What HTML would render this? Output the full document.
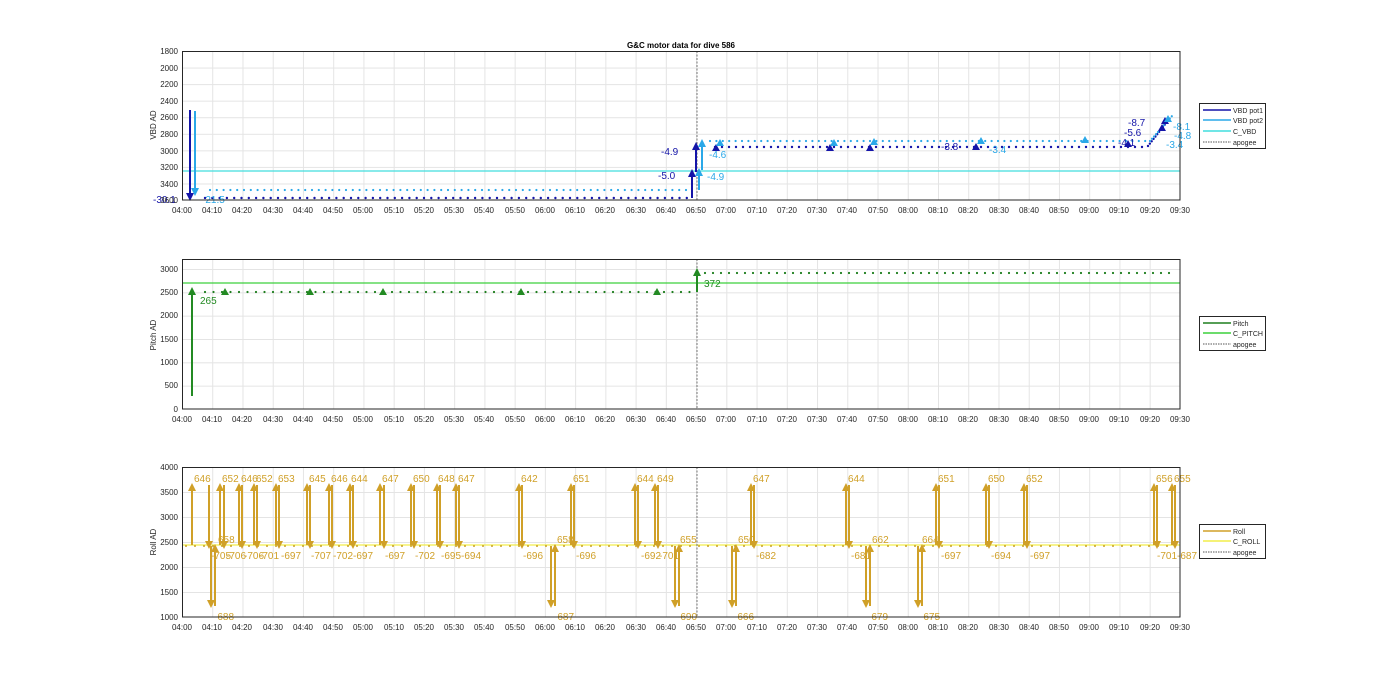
<!DOCTYPE html>
<html><head><meta charset="utf-8"><style>body{margin:0;background:#fff}svg{display:block}text{font-family:"Liberation Sans",sans-serif}</style></head><body>
<svg width="1400" height="693" viewBox="0 0 1400 693" xmlns="http://www.w3.org/2000/svg">
<defs>
<pattern id="vg" x="182" y="0" width="30.24" height="700" patternUnits="userSpaceOnUse"><line x1="0.5" y1="0" x2="0.5" y2="700" stroke="#e4e4e4"/></pattern>
<pattern id="hg1" x="0" y="51" width="1400" height="16.56" patternUnits="userSpaceOnUse"><line x1="0" y1="0.5" x2="1400" y2="0.5" stroke="#e4e4e4"/></pattern>
<pattern id="hg2" x="0" y="269" width="1400" height="23.33" patternUnits="userSpaceOnUse"><line x1="0" y1="0.5" x2="1400" y2="0.5" stroke="#e4e4e4"/></pattern>
<pattern id="hg3" x="0" y="467" width="1400" height="25" patternUnits="userSpaceOnUse"><line x1="0" y1="0.5" x2="1400" y2="0.5" stroke="#e4e4e4"/></pattern>
<marker id="mdb" markerUnits="userSpaceOnUse" markerWidth="8" markerHeight="8" refX="6" refY="4" orient="auto"><path d="M0,0 L8,4 L0,8z" fill="#1414a8"/></marker>
<marker id="mlb" markerUnits="userSpaceOnUse" markerWidth="8" markerHeight="8" refX="6" refY="4" orient="auto"><path d="M0,0 L8,4 L0,8z" fill="#2aa8e8"/></marker>
<marker id="mg" markerUnits="userSpaceOnUse" markerWidth="8" markerHeight="8" refX="6" refY="4" orient="auto"><path d="M0,0 L8,4 L0,8z" fill="#238a23"/></marker>
<marker id="my" markerUnits="userSpaceOnUse" markerWidth="8" markerHeight="8" refX="6" refY="4" orient="auto"><path d="M0,0 L8,4 L0,8z" fill="#d0a028"/></marker>
</defs>

<!-- ===== TOP ===== -->
<rect x="182" y="51" width="998" height="149" fill="url(#vg)"/>
<rect x="182" y="51" width="998" height="149" fill="url(#hg1)"/>
<text x="681" y="48" font-size="8" font-weight="bold" text-anchor="middle">G&amp;C motor data for dive 586</text>
<line x1="182" y1="171" x2="1180" y2="171" stroke="#40dede" stroke-width="1.3"/>
<line x1="697" y1="51" x2="697" y2="200" stroke="#777" stroke-dasharray="2,1.5"/>
<line x1="205" y1="198" x2="690" y2="198" stroke="#1414a8" stroke-width="2.4" stroke-linecap="round" stroke-dasharray="0 7.3"/>
<line x1="210" y1="190" x2="690" y2="190" stroke="#2aa8e8" stroke-width="2.2" stroke-linecap="round" stroke-dasharray="0 6.8"/>
<line x1="715" y1="147" x2="1148" y2="147" stroke="#1414a8" stroke-width="2.4" stroke-linecap="round" stroke-dasharray="0 7"/>
<line x1="710" y1="141" x2="1150" y2="141" stroke="#2aa8e8" stroke-width="2.2" stroke-linecap="round" stroke-dasharray="0 6.4"/>
<line x1="1148" y1="146" x2="1170" y2="118" stroke="#1414a8" stroke-width="2.4" stroke-linecap="round" stroke-dasharray="0 3"/>
<line x1="1150" y1="141" x2="1172" y2="116" stroke="#2aa8e8" stroke-width="2.2" stroke-linecap="round" stroke-dasharray="0 3"/>
<line x1="190" y1="110" x2="190" y2="199" stroke="#1414a8" stroke-width="2" marker-end="url(#mdb)"/>
<line x1="195" y1="111" x2="195" y2="194" stroke="#2aa8e8" stroke-width="2" marker-end="url(#mlb)"/>
<line x1="692" y1="198" x2="692" y2="171" stroke="#1414a8" stroke-width="2" marker-end="url(#mdb)"/>
<line x1="696" y1="172" x2="696" y2="144" stroke="#1414a8" stroke-width="2" marker-end="url(#mdb)"/>
<line x1="699" y1="190" x2="699" y2="170" stroke="#2aa8e8" stroke-width="2" marker-end="url(#mlb)"/>
<line x1="702" y1="170" x2="702" y2="141" stroke="#2aa8e8" stroke-width="2" marker-end="url(#mlb)"/>
<g fill="#1414a8"><path d="M712,151l4,-7l4,7z M826,151l4,-7l4,7z M866,151l4,-7l4,7z M972,150l4,-7l4,7z M1124,147l4,-7l4,7z M1158,131l4,-7l4,7z M1161,124l4,-7l4,7z"/></g>
<g fill="#2aa8e8"><path d="M716,146l4,-7l4,7z M830,146l4,-7l4,7z M870,145l4,-7l4,7z M977,144l4,-7l4,7z M1081,143l4,-7l4,7z M1164,122l4,-7l4,7z"/></g>
<g font-size="10" fill="#1414a8"><text x="153" y="203">-30.1</text><text x="658" y="179">-5.0</text><text x="661" y="155">-4.9</text><text x="941" y="150">-3.8</text><text x="1128" y="126">-8.7</text><text x="1124" y="136">-5.6</text><text x="1118" y="146">-4.1</text></g>
<g font-size="10" fill="#2aa8e8"><text x="202" y="203">-21.5</text><text x="709" y="158">-4.6</text><text x="707" y="180">-4.9</text><text x="989" y="153">-3.4</text><text x="1173" y="130">-8.1</text><text x="1174" y="139">-4.8</text><text x="1166" y="148">-3.4</text></g>
<rect x="182.5" y="51.5" width="997.5" height="148.5" fill="none" stroke="#262626" stroke-width="1"/>
<g font-size="8" fill="#262626" text-anchor="end"><text x="178" y="54">1800</text><text x="178" y="71">2000</text><text x="178" y="87">2200</text><text x="178" y="104">2400</text><text x="178" y="120">2600</text><text x="178" y="137">2800</text><text x="178" y="154">3000</text><text x="178" y="170">3200</text><text x="178" y="187">3400</text><text x="178" y="203">3600</text></g>
<text transform="translate(156,125) rotate(-90)" font-size="8" text-anchor="middle" fill="#262626">VBD AD</text>
<g font-size="8" fill="#262626" text-anchor="middle"><text x="182" y="213">04:00</text><text x="212" y="213">04:10</text><text x="242" y="213">04:20</text><text x="273" y="213">04:30</text><text x="303" y="213">04:40</text><text x="333" y="213">04:50</text><text x="363" y="213">05:00</text><text x="394" y="213">05:10</text><text x="424" y="213">05:20</text><text x="454" y="213">05:30</text><text x="484" y="213">05:40</text><text x="515" y="213">05:50</text><text x="545" y="213">06:00</text><text x="575" y="213">06:10</text><text x="605" y="213">06:20</text><text x="636" y="213">06:30</text><text x="666" y="213">06:40</text><text x="696" y="213">06:50</text><text x="726" y="213">07:00</text><text x="757" y="213">07:10</text><text x="787" y="213">07:20</text><text x="817" y="213">07:30</text><text x="847" y="213">07:40</text><text x="878" y="213">07:50</text><text x="908" y="213">08:00</text><text x="938" y="213">08:10</text><text x="968" y="213">08:20</text><text x="999" y="213">08:30</text><text x="1029" y="213">08:40</text><text x="1059" y="213">08:50</text><text x="1089" y="213">09:00</text><text x="1119" y="213">09:10</text><text x="1150" y="213">09:20</text><text x="1180" y="213">09:30</text></g>
<rect x="1199.5" y="103.5" width="66" height="45" fill="#fff" stroke="#262626"/>
<line x1="1203" y1="110" x2="1231" y2="110" stroke="#1414a8" stroke-width="1.5"/><line x1="1203" y1="120" x2="1231" y2="120" stroke="#2aa8e8" stroke-width="1.5"/><line x1="1203" y1="131" x2="1231" y2="131" stroke="#40dede" stroke-width="1.5"/><line x1="1203" y1="142" x2="1231" y2="142" stroke="#555" stroke-dasharray="1.5,1"/>
<g font-size="7" fill="#262626"><text x="1233" y="113">VBD pot1</text><text x="1233" y="123">VBD pot2</text><text x="1233" y="134">C_VBD</text><text x="1233" y="145">apogee</text></g>

<!-- ===== MIDDLE ===== -->
<rect x="182" y="259" width="998" height="150" fill="url(#vg)"/>
<rect x="182" y="259" width="998" height="150" fill="url(#hg2)"/>
<line x1="182" y1="283" x2="1180" y2="283" stroke="#3cd03c" stroke-width="1.3"/>
<line x1="697" y1="259" x2="697" y2="409" stroke="#777" stroke-dasharray="2,1.5"/>
<line x1="205" y1="292" x2="690" y2="292" stroke="#1e7e1e" stroke-width="2.2" stroke-linecap="round" stroke-dasharray="0 8.5"/>
<line x1="705" y1="273" x2="1172" y2="273" stroke="#1e7e1e" stroke-width="2.2" stroke-linecap="round" stroke-dasharray="0 8"/>
<line x1="192" y1="396" x2="192" y2="289" stroke="#238a23" stroke-width="2" marker-end="url(#mg)"/>
<line x1="697" y1="292" x2="697" y2="270" stroke="#238a23" stroke-width="2" marker-end="url(#mg)"/>
<g fill="#238a23"><path d="M221,295l4,-7l4,7z M306,295l4,-7l4,7z M379,295l4,-7l4,7z M517,295l4,-7l4,7z M653,295l4,-7l4,7z"/></g>
<g font-size="10" fill="#238a23"><text x="200" y="304">265</text><text x="704" y="287">372</text></g>
<rect x="182.5" y="259.5" width="997.5" height="149.5" fill="none" stroke="#262626"/>
<g font-size="8" fill="#262626" text-anchor="end"><text x="178" y="272">3000</text><text x="178" y="295">2500</text><text x="178" y="318">2000</text><text x="178" y="342">1500</text><text x="178" y="365">1000</text><text x="178" y="388">500</text><text x="178" y="412">0</text></g>
<text transform="translate(156,335) rotate(-90)" font-size="8" text-anchor="middle" fill="#262626">Pitch AD</text>
<g font-size="8" fill="#262626" text-anchor="middle"><text x="182" y="422">04:00</text><text x="212" y="422">04:10</text><text x="242" y="422">04:20</text><text x="273" y="422">04:30</text><text x="303" y="422">04:40</text><text x="333" y="422">04:50</text><text x="363" y="422">05:00</text><text x="394" y="422">05:10</text><text x="424" y="422">05:20</text><text x="454" y="422">05:30</text><text x="484" y="422">05:40</text><text x="515" y="422">05:50</text><text x="545" y="422">06:00</text><text x="575" y="422">06:10</text><text x="605" y="422">06:20</text><text x="636" y="422">06:30</text><text x="666" y="422">06:40</text><text x="696" y="422">06:50</text><text x="726" y="422">07:00</text><text x="757" y="422">07:10</text><text x="787" y="422">07:20</text><text x="817" y="422">07:30</text><text x="847" y="422">07:40</text><text x="878" y="422">07:50</text><text x="908" y="422">08:00</text><text x="938" y="422">08:10</text><text x="968" y="422">08:20</text><text x="999" y="422">08:30</text><text x="1029" y="422">08:40</text><text x="1059" y="422">08:50</text><text x="1089" y="422">09:00</text><text x="1119" y="422">09:10</text><text x="1150" y="422">09:20</text><text x="1180" y="422">09:30</text></g>
<rect x="1199.5" y="316.5" width="66" height="34" fill="#fff" stroke="#262626"/>
<line x1="1203" y1="323" x2="1231" y2="323" stroke="#1e7e1e" stroke-width="1.5"/><line x1="1203" y1="333" x2="1231" y2="333" stroke="#3cd03c" stroke-width="1.5"/><line x1="1203" y1="344" x2="1231" y2="344" stroke="#555" stroke-dasharray="1.5,1"/>
<g font-size="7" fill="#262626"><text x="1233" y="326">Pitch</text><text x="1233" y="336">C_PITCH</text><text x="1233" y="347">apogee</text></g>

<!-- ===== BOTTOM ===== -->
<rect x="182" y="467" width="998" height="150" fill="url(#vg)"/>
<rect x="182" y="467" width="998" height="150" fill="url(#hg3)"/>
<line x1="182" y1="545" x2="1180" y2="545" stroke="#f2ee4a" stroke-width="1.3"/>
<line x1="697" y1="467" x2="697" y2="617" stroke="#777" stroke-dasharray="2,1.5"/>
<line x1="186" y1="546" x2="1172" y2="546" stroke="#c8a028" stroke-width="2" stroke-linecap="round" stroke-dasharray="0 9"/>
<g stroke="#d0a028" stroke-width="2">
<line x1="192" y1="545" x2="192" y2="485" marker-end="url(#my)"/><line x1="209" y1="485" x2="209" y2="547" marker-end="url(#my)"/>
<line x1="220" y1="545" x2="220" y2="485" marker-end="url(#my)"/><line x1="224" y1="485" x2="224" y2="547" marker-end="url(#my)"/>
<line x1="239" y1="545" x2="239" y2="485" marker-end="url(#my)"/><line x1="242" y1="485" x2="242" y2="547" marker-end="url(#my)"/>
<line x1="254" y1="545" x2="254" y2="485" marker-end="url(#my)"/><line x1="257" y1="485" x2="257" y2="547" marker-end="url(#my)"/>
<line x1="276" y1="545" x2="276" y2="485" marker-end="url(#my)"/><line x1="279" y1="485" x2="279" y2="547" marker-end="url(#my)"/>
<line x1="307" y1="545" x2="307" y2="485" marker-end="url(#my)"/><line x1="310" y1="485" x2="310" y2="547" marker-end="url(#my)"/>
<line x1="329" y1="545" x2="329" y2="485" marker-end="url(#my)"/><line x1="332" y1="485" x2="332" y2="547" marker-end="url(#my)"/>
<line x1="350" y1="545" x2="350" y2="485" marker-end="url(#my)"/><line x1="353" y1="485" x2="353" y2="547" marker-end="url(#my)"/>
<line x1="380" y1="545" x2="380" y2="485" marker-end="url(#my)"/><line x1="384" y1="485" x2="384" y2="547" marker-end="url(#my)"/>
<line x1="411" y1="545" x2="411" y2="485" marker-end="url(#my)"/><line x1="414" y1="485" x2="414" y2="547" marker-end="url(#my)"/>
<line x1="437" y1="545" x2="437" y2="485" marker-end="url(#my)"/><line x1="440" y1="485" x2="440" y2="547" marker-end="url(#my)"/>
<line x1="456" y1="545" x2="456" y2="485" marker-end="url(#my)"/><line x1="459" y1="485" x2="459" y2="547" marker-end="url(#my)"/>
<line x1="519" y1="545" x2="519" y2="485" marker-end="url(#my)"/><line x1="522" y1="485" x2="522" y2="547" marker-end="url(#my)"/>
<line x1="571" y1="545" x2="571" y2="485" marker-end="url(#my)"/><line x1="574" y1="485" x2="574" y2="547" marker-end="url(#my)"/>
<line x1="635" y1="545" x2="635" y2="485" marker-end="url(#my)"/><line x1="638" y1="485" x2="638" y2="547" marker-end="url(#my)"/>
<line x1="655" y1="545" x2="655" y2="485" marker-end="url(#my)"/><line x1="658" y1="485" x2="658" y2="547" marker-end="url(#my)"/>
<line x1="751" y1="545" x2="751" y2="485" marker-end="url(#my)"/><line x1="754" y1="485" x2="754" y2="547" marker-end="url(#my)"/>
<line x1="846" y1="545" x2="846" y2="485" marker-end="url(#my)"/><line x1="849" y1="485" x2="849" y2="547" marker-end="url(#my)"/>
<line x1="936" y1="545" x2="936" y2="485" marker-end="url(#my)"/><line x1="939" y1="485" x2="939" y2="547" marker-end="url(#my)"/>
<line x1="986" y1="545" x2="986" y2="485" marker-end="url(#my)"/><line x1="989" y1="485" x2="989" y2="547" marker-end="url(#my)"/>
<line x1="1024" y1="545" x2="1024" y2="485" marker-end="url(#my)"/><line x1="1027" y1="485" x2="1027" y2="547" marker-end="url(#my)"/>
<line x1="1154" y1="545" x2="1154" y2="485" marker-end="url(#my)"/><line x1="1157" y1="485" x2="1157" y2="547" marker-end="url(#my)"/>
<line x1="1172" y1="545" x2="1172" y2="485" marker-end="url(#my)"/><line x1="1175" y1="485" x2="1175" y2="547" marker-end="url(#my)"/>
<line x1="211" y1="546" x2="211" y2="606" marker-end="url(#my)"/><line x1="215" y1="606" x2="215" y2="546" marker-end="url(#my)"/>
<line x1="551" y1="546" x2="551" y2="606" marker-end="url(#my)"/><line x1="555" y1="606" x2="555" y2="546" marker-end="url(#my)"/>
<line x1="675" y1="546" x2="675" y2="606" marker-end="url(#my)"/><line x1="679" y1="606" x2="679" y2="546" marker-end="url(#my)"/>
<line x1="732" y1="546" x2="732" y2="606" marker-end="url(#my)"/><line x1="736" y1="606" x2="736" y2="546" marker-end="url(#my)"/>
<line x1="866" y1="546" x2="866" y2="606" marker-end="url(#my)"/><line x1="870" y1="606" x2="870" y2="546" marker-end="url(#my)"/>
<line x1="918" y1="546" x2="918" y2="606" marker-end="url(#my)"/><line x1="922" y1="606" x2="922" y2="546" marker-end="url(#my)"/>
</g>
<g font-size="10" fill="#d0a028">
<text x="194" y="482">646</text><text x="222" y="482">652</text><text x="241" y="482">646</text><text x="256" y="482">652</text><text x="278" y="482">653</text><text x="309" y="482">645</text><text x="331" y="482">646</text><text x="351" y="482">644</text><text x="382" y="482">647</text><text x="413" y="482">650</text><text x="438" y="482">648</text><text x="458" y="482">647</text><text x="521" y="482">642</text><text x="573" y="482">651</text><text x="637" y="482">644</text><text x="657" y="482">649</text><text x="753" y="482">647</text><text x="848" y="482">644</text><text x="938" y="482">651</text><text x="988" y="482">650</text><text x="1026" y="482">652</text><text x="1156" y="482">656</text><text x="1174" y="482">655</text>
<text x="218" y="543">658</text><text x="557" y="543">658</text><text x="680" y="543">655</text><text x="738" y="543">650</text><text x="872" y="543">662</text><text x="922" y="543">664</text>
<text x="211" y="559">-705</text><text x="226" y="559">-706</text><text x="244" y="559">-706</text><text x="259" y="559">-701</text><text x="281" y="559">-697</text><text x="311" y="559">-707</text><text x="333" y="559">-702</text><text x="353" y="559">-697</text><text x="385" y="559">-697</text><text x="415" y="559">-702</text><text x="441" y="559">-695</text><text x="461" y="559">-694</text><text x="523" y="559">-696</text><text x="576" y="559">-696</text><text x="641" y="559">-692</text><text x="659" y="559">-701</text><text x="756" y="559">-682</text><text x="851" y="559">-681</text><text x="941" y="559">-697</text><text x="991" y="559">-694</text><text x="1030" y="559">-697</text><text x="1157" y="559">-701</text><text x="1177" y="559">-687</text>
<text x="214" y="620">-688</text><text x="554" y="620">-687</text><text x="677" y="620">-690</text><text x="734" y="620">-666</text><text x="868" y="620">-679</text><text x="920" y="620">-675</text>
</g>
<rect x="182.5" y="467.5" width="997.5" height="149.5" fill="none" stroke="#262626"/>
<g font-size="8" fill="#262626" text-anchor="end"><text x="178" y="470">4000</text><text x="178" y="495">3500</text><text x="178" y="520">3000</text><text x="178" y="545">2500</text><text x="178" y="570">2000</text><text x="178" y="595">1500</text><text x="178" y="620">1000</text></g>
<text transform="translate(156,542) rotate(-90)" font-size="8" text-anchor="middle" fill="#262626">Roll AD</text>
<g font-size="8" fill="#262626" text-anchor="middle"><text x="182" y="630">04:00</text><text x="212" y="630">04:10</text><text x="242" y="630">04:20</text><text x="273" y="630">04:30</text><text x="303" y="630">04:40</text><text x="333" y="630">04:50</text><text x="363" y="630">05:00</text><text x="394" y="630">05:10</text><text x="424" y="630">05:20</text><text x="454" y="630">05:30</text><text x="484" y="630">05:40</text><text x="515" y="630">05:50</text><text x="545" y="630">06:00</text><text x="575" y="630">06:10</text><text x="605" y="630">06:20</text><text x="636" y="630">06:30</text><text x="666" y="630">06:40</text><text x="696" y="630">06:50</text><text x="726" y="630">07:00</text><text x="757" y="630">07:10</text><text x="787" y="630">07:20</text><text x="817" y="630">07:30</text><text x="847" y="630">07:40</text><text x="878" y="630">07:50</text><text x="908" y="630">08:00</text><text x="938" y="630">08:10</text><text x="968" y="630">08:20</text><text x="999" y="630">08:30</text><text x="1029" y="630">08:40</text><text x="1059" y="630">08:50</text><text x="1089" y="630">09:00</text><text x="1119" y="630">09:10</text><text x="1150" y="630">09:20</text><text x="1180" y="630">09:30</text></g>
<rect x="1199.5" y="524.5" width="66" height="34" fill="#fff" stroke="#262626"/>
<line x1="1203" y1="531" x2="1231" y2="531" stroke="#d0a028" stroke-width="1.5"/><line x1="1203" y1="541" x2="1231" y2="541" stroke="#f2ee4a" stroke-width="1.5"/><line x1="1203" y1="552" x2="1231" y2="552" stroke="#555" stroke-dasharray="1.5,1"/>
<g font-size="7" fill="#262626"><text x="1233" y="534">Roll</text><text x="1233" y="544">C_ROLL</text><text x="1233" y="555">apogee</text></g>
</svg>
</body></html>
